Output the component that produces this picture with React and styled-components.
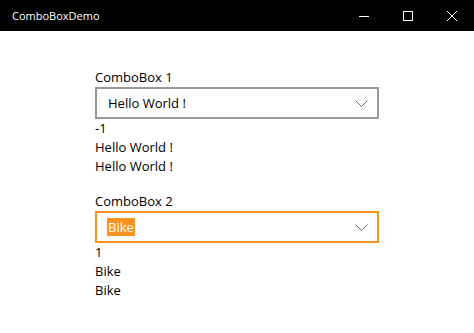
import React from "react";
import styled, { createGlobalStyle } from "styled-components";

const GlobalStyle = createGlobalStyle`
  html, body {
    margin: 0;
    padding: 0;
    background: #fff;
  }
  body {
    font-family: "Open Sans", "Noto Sans", sans-serif;
  }
`;

const Window = styled.div`
  width: 474px;
  height: 333px;
  background: #fff;
  display: flex;
  flex-direction: column;
  overflow: hidden;
`;

const TitleBar = styled.div`
  height: 31px;
  background: #000;
  color: #fff;
  display: flex;
  align-items: center;
  flex-shrink: 0;
`;

const Title = styled.div`
  flex: 1;
  padding-left: 12px;
  font-size: 11px;
`;

const Controls = styled.div`
  display: flex;
  height: 100%;
`;

const ControlButton = styled.div`
  width: 44px;
  height: 100%;
  display: flex;
  align-items: center;
  justify-content: center;
`;

const Content = styled.div`
  padding: 37px 0 0 95px;
  display: flex;
  flex-direction: column;
  gap: 16px;
`;

const Group = styled.div`
  display: flex;
  flex-direction: column;
  width: 284px;
`;

const Label = styled.div`
  font-size: 13px;
  line-height: 19px;
  color: #000;
`;

const Combo = styled.div`
  height: 32px;
  box-sizing: border-box;
  border: 2px solid ${(p) => (p.$focused ? "#f7931e" : "#999")};
  display: flex;
  align-items: center;
  padding: 0 9px 0 11px;
  font-size: 13px;
  color: #000;
`;

const ComboText = styled.span`
  flex: 1;
  display: flex;
`;

const Selected = styled.span`
  background: ${(p) => (p.$active ? "#f7931e" : "transparent")};
  color: ${(p) => (p.$active ? "#fff" : "#000")};
  line-height: 18px;
  padding: 0 1px;
  margin-left: -1px;
`;

const Chevron = () => (
  <svg width="13" height="7" viewBox="0 0 13 7">
    <path d="M0.5 0.5 L6.5 6.5 L12.5 0.5" fill="none" stroke="#666" strokeWidth="1" />
  </svg>
);

const Output = styled.div`
  font-size: 13px;
  line-height: 19px;
  color: #000;
`;

const ComboGroup = ({ label, value, index, focused }) => (
  <Group>
    <Label>{label}</Label>
    <Combo $focused={focused}>
      <ComboText>
        <Selected $active={focused}>{value}</Selected>
      </ComboText>
      <Chevron />
    </Combo>
    <Output>{index}</Output>
    <Output>{value}</Output>
    <Output>{value}</Output>
  </Group>
);

export default function App() {
  return (
    <>
      <GlobalStyle />
      <Window>
        <TitleBar>
          <Title>ComboBoxDemo</Title>
          <Controls>
            <ControlButton>
              <svg width="10" height="10" viewBox="0 0 10 10">
                <path d="M0 5.5 H10" stroke="#fff" strokeWidth="1" />
              </svg>
            </ControlButton>
            <ControlButton>
              <svg width="10" height="10" viewBox="0 0 10 10">
                <rect x="0.5" y="0.5" width="9" height="9" fill="none" stroke="#fff" strokeWidth="1" />
              </svg>
            </ControlButton>
            <ControlButton>
              <svg width="10" height="10" viewBox="0 0 10 10">
                <path d="M0 0 L10 10 M10 0 L0 10" stroke="#fff" strokeWidth="1" />
              </svg>
            </ControlButton>
          </Controls>
        </TitleBar>
        <Content>
          <ComboGroup label="ComboBox 1" value="Hello World !" index="-1" />
          <ComboGroup label="ComboBox 2" value="Bike" index="1" focused />
        </Content>
      </Window>
    </>
  );
}
